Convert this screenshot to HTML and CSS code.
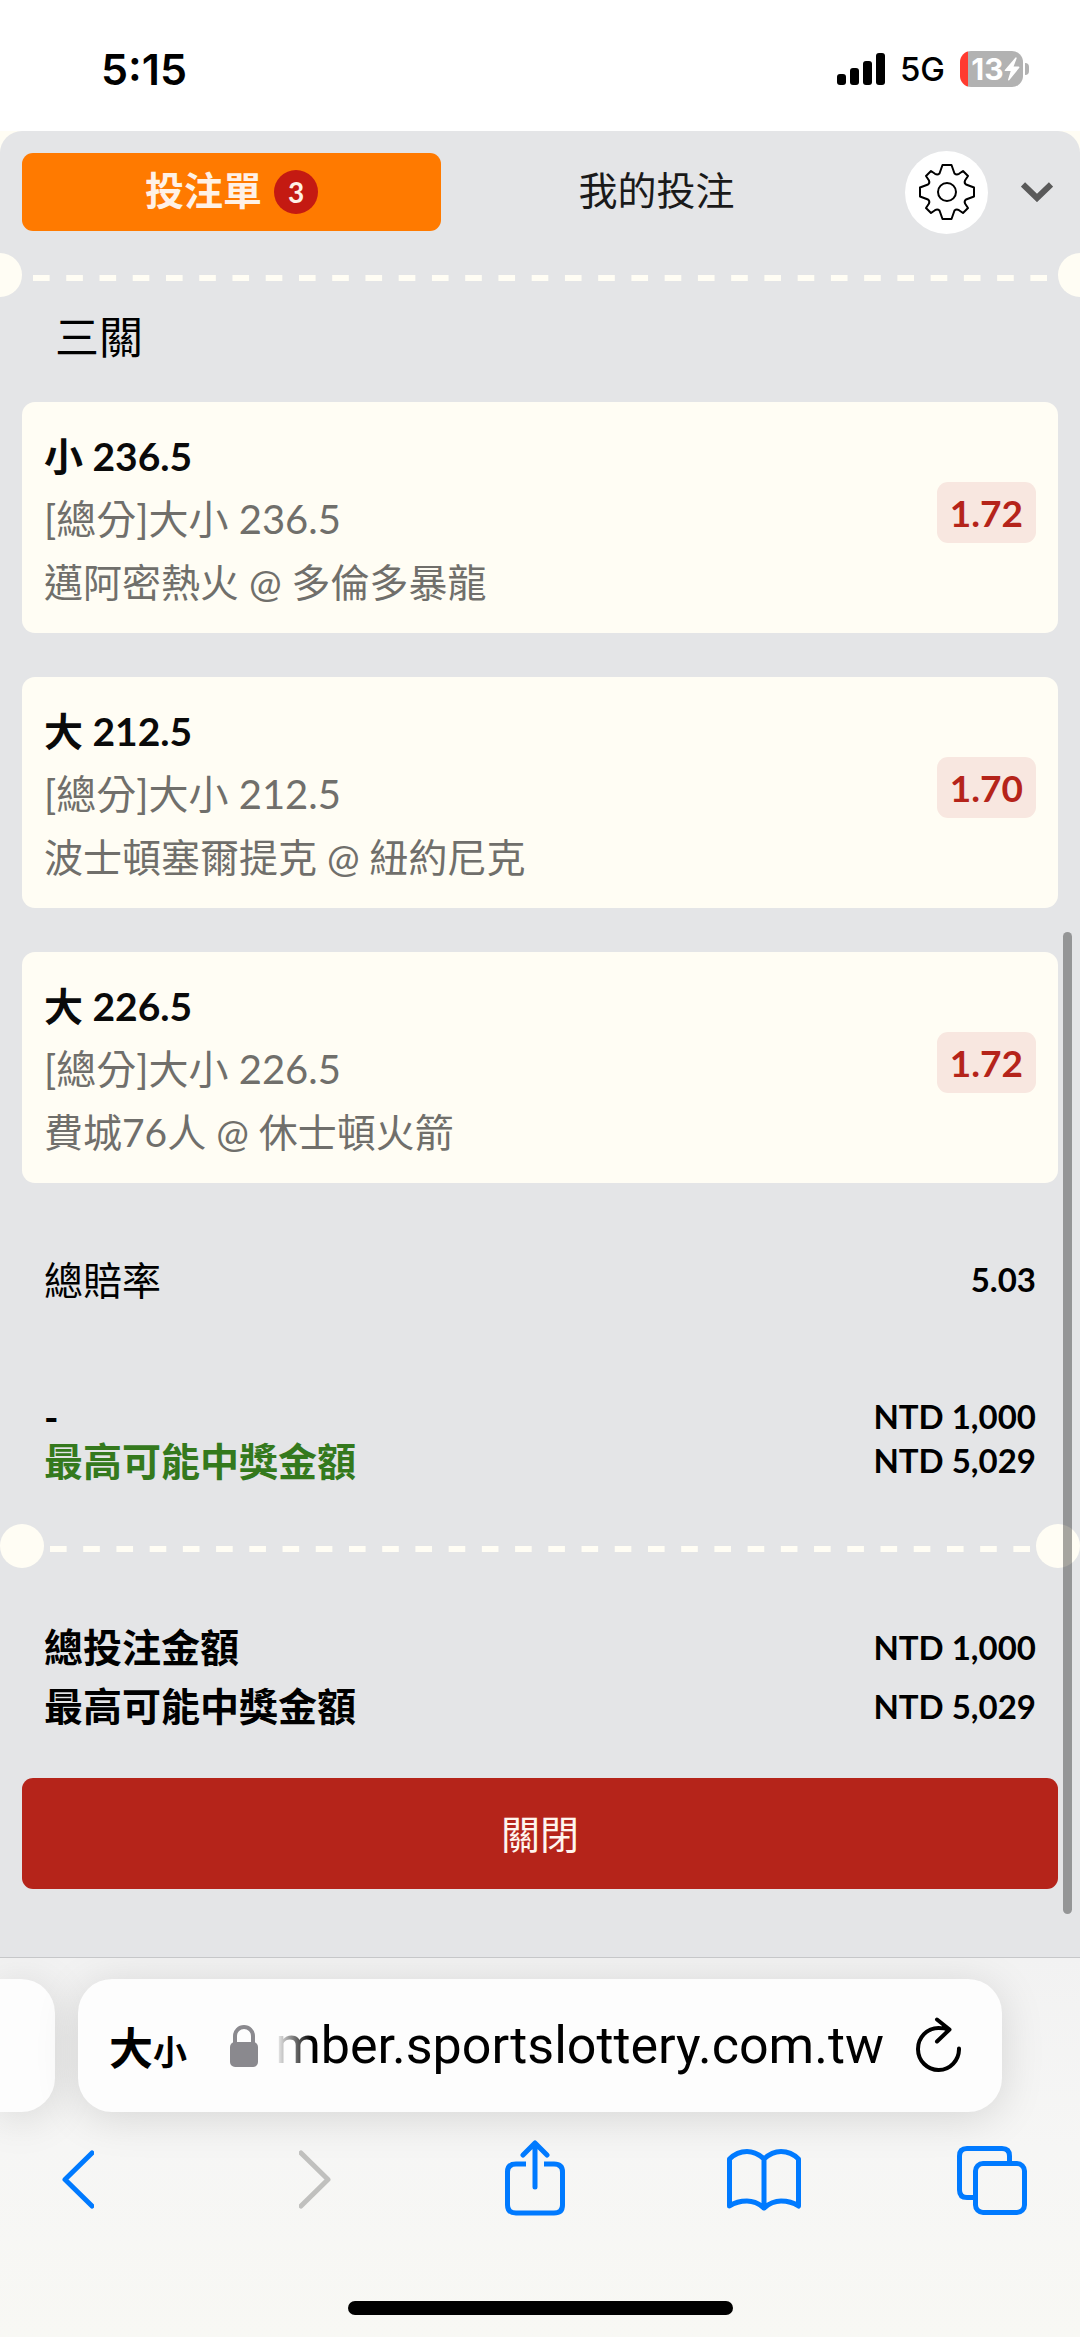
FILE: index.html
```html
<!DOCTYPE html>
<html lang="zh-Hant">
<head>
<meta charset="utf-8">
<meta name="viewport" content="width=device-width, initial-scale=1">
<title>投注單</title>
<link rel="stylesheet" href="styles.css">
</head>
<body>
<header class="status">
  <time class="status-time">5:15</time>
  <div class="status-right">
    <svg class="signal" viewBox="0 0 48 32" aria-hidden="true">
      <rect x="0" y="21" width="9" height="11" rx="3"/>
      <rect x="13" y="15" width="9" height="17" rx="3"/>
      <rect x="26" y="8" width="9" height="24" rx="3"/>
      <rect x="39" y="0" width="9" height="32" rx="3"/>
    </svg>
    <span class="network">5G</span>
    <div class="battery">
      <span class="battery-level">13</span>
      <svg class="bolt" viewBox="0 0 16 24" aria-hidden="true"><path d="M11.500 0.500 L0.800 13 Q0.300 14 1.500 14 H6.700 L4 22.800 Q4.200 24 5.200 23.200 L15.300 10.800 Q15.800 9.600 14.500 9.600 H9.600 L12.700 1.200 Q12.500 0 11.500 0.500Z"/></svg>
    </div>
  </div>
</header>

<main class="sheet-area">
  <div class="sheet">
    <nav class="tabs">
      <button class="tab tab-active" type="button">投注單<span class="count">3</span></button>
      <button class="tab" type="button">我的投注</button>
      <div class="tab-tools">
        <button class="gear" type="button" aria-label="設定">
          <svg viewBox="-28 -28 56 56" aria-hidden="true">
            <path d="M-4.500 -27 H4.500 L7.500 -18.500 Q9.500 -16.800 12 -18.200 L16 -21 L21 -16 L18 -11.500 Q17 -9 19 -7.500 L27 -4.500 V4.500 L19 7.500 Q17 9 18 11.500 L21 16 L16 21 L12 18.200 Q9.500 16.800 7.500 18.500 L4.500 27 H-4.500 L-7.500 18.500 Q-9.500 16.800 -12 18.200 L-16 21 L-21 16 L-18 11.500 Q-17 9 -19 7.500 L-27 4.500 V-4.500 L-19 -7.500 Q-17 -9 -18 -11.500 L-21 -16 L-16 -21 L-12 -18.200 Q-9.500 -16.800 -7.500 -18.500 Z"/>
            <circle r="9"/>
          </svg>
        </button>
        <button class="collapse" type="button" aria-label="收合">
          <svg viewBox="0 0 32 20" aria-hidden="true"><path d="M2 2.500 L16 16 L30 2.500"/></svg>
        </button>
      </div>
    </nav>

    <div class="divider divider-bleed">
      <span class="notch"></span>
      <svg class="dashes" aria-hidden="true"><line x1="0" y1="25" x2="100%" y2="25" pathLength="61"/></svg>
      <span class="notch"></span>
    </div>

    <h1 class="group-title">三關</h1>

    <ul class="bets">
      <li class="bet">
        <div class="bet-text">
          <strong class="bet-pick">小 236.5</strong>
          <span class="bet-market">[總分]大小 236.5</span>
          <span class="bet-game">邁阿密熱火 @ 多倫多暴龍</span>
        </div>
        <span class="odds">1.72</span>
      </li>
      <li class="bet">
        <div class="bet-text">
          <strong class="bet-pick">大 212.5</strong>
          <span class="bet-market">[總分]大小 212.5</span>
          <span class="bet-game">波士頓塞爾提克 @ 紐約尼克</span>
        </div>
        <span class="odds">1.70</span>
      </li>
      <li class="bet">
        <div class="bet-text">
          <strong class="bet-pick">大 226.5</strong>
          <span class="bet-market">[總分]大小 226.5</span>
          <span class="bet-game">費城76人 @ 休士頓火箭</span>
        </div>
        <span class="odds">1.72</span>
      </li>
    </ul>

    <dl class="rows total-odds">
      <div class="row"><dt>總賠率</dt><dd>5.03</dd></div>
    </dl>
    <dl class="rows stake">
      <div class="row"><dt class="strong">-</dt><dd>NTD 1,000</dd></div>
      <div class="row"><dt class="strong win">最高可能中獎金額</dt><dd>NTD 5,029</dd></div>
    </dl>

    <div class="divider divider-inset">
      <span class="notch"></span>
      <svg class="dashes" aria-hidden="true"><line x1="0" y1="25" x2="100%" y2="25" pathLength="59"/></svg>
      <span class="notch"></span>
    </div>

    <dl class="rows totals">
      <div class="row"><dt class="strong">總投注金額</dt><dd>NTD 1,000</dd></div>
      <div class="row"><dt class="strong">最高可能中獎金額</dt><dd>NTD 5,029</dd></div>
    </dl>

    <button class="close" type="button">關閉</button>
    <span class="scrollbar"></span>
  </div>
</main>

<footer class="browser">
  <div class="address-row">
    <span class="previous-tab"></span>
    <div class="address">
      <button class="page-menu" type="button"><span class="page-menu-big">大</span><span class="page-menu-small">小</span></button>
      <svg class="lock" viewBox="0 0 28 42" aria-hidden="true"><rect x="0" y="17" width="28" height="25" rx="5"/><path d="M5 19 V11 A9 9 0 0 1 23 11 V19"/></svg>
      <a class="url" href="#">mber.sportslottery.com.tw</a>
      <button class="reload" type="button" aria-label="重新載入">
        <svg viewBox="0 0 46 58" width="46" height="58" aria-hidden="true"><path d="M44 31.500 A20.500 21 0 1 1 23.500 11 Q29 11 34 12.500 M22 2.500 L34.500 12.500 L22 24.500"/></svg>
      </button>
    </div>
  </div>
  <div class="toolbar">
    <button class="tool" type="button" aria-label="上一頁"><svg viewBox="0 0 32 80" width="32" height="80" aria-hidden="true"><path d="M30 13 L3 39.500 L30 66"/></svg></button>
    <button class="tool tool-forward" type="button" aria-label="下一頁" disabled><svg viewBox="0 0 32 80" width="32" height="80" aria-hidden="true"><path d="M2 13 L29 39.500 L2 66"/></svg></button>
    <button class="tool" type="button" aria-label="分享"><svg viewBox="0 0 60 80" width="60" height="80" aria-hidden="true"><path class="butt" d="M21 24 H11 Q2.500 24 2.500 32 V65 Q2.500 73 11 73 H49 Q57.500 73 57.500 65 V32 Q57.500 24 49 24 H39"/><path d="M30 47 V3.500 M18 15 L30 3 L42 15"/></svg></button>
    <button class="tool" type="button" aria-label="書籤"><svg viewBox="0 0 74 80" width="74" height="80" aria-hidden="true"><path d="M37 19 Q29 11.500 20 11.500 Q10 11.500 2.500 19 V66 Q10 61 20 61 Q29 61 37 68 Q45 61 54 61 Q64 61 71.500 66 V19 Q64 11.500 54 11.500 Q45 11.500 37 19 V68"/></svg></button>
    <button class="tool" type="button" aria-label="分頁"><svg viewBox="0 0 70 80" width="70" height="80" aria-hidden="true"><path class="butt" d="M52.500 21 V16 Q52.500 8.500 45 8.500 H10 Q2.500 8.500 2.500 16 V50 Q2.500 57.500 10 57.500 H16"/><rect x="18.500" y="23.500" width="49" height="49" rx="7.500"/></svg></button>
  </div>
  <div class="home-indicator"></div>
</footer>
</body>
</html>
```

FILE: styles.css
```css
:root {
  --cream: #fffdf4;
  --panel: #e4e5e7;
  --red: #b5241a;
  --blue: #007aff;
  --site: Lato, "Noto Sans CJK TC", sans-serif;
  --system: Inter, "Noto Sans CJK TC", sans-serif;
}

* { box-sizing: border-box; }

body {
  margin: 0;
  background: #fff;
  color: #000;
  font-family: var(--site);
  font-size: 39px;
}

button {
  margin: 0;
  padding: 0;
  border: 0;
  background: none;
  color: inherit;
  font: inherit;
}

ul, dl, dd { margin: 0; padding: 0; list-style: none; }

/* Status bar */
.status {
  display: flex;
  justify-content: space-between;
  align-items: center;
  height: 131px;
  padding: 6px 57px 0 101px;
  font-family: var(--system);
}
.status-time { font-size: 43px; font-weight: 600; }
.status-right { display: flex; align-items: center; gap: 15px; }
.signal { width: 48px; height: 32px; }
.network { font-size: 33px; font-weight: 500; }
.battery {
  position: relative;
  display: flex;
  align-items: center;
  justify-content: center;
  width: 63px;
  height: 36px;
  padding-left: 8px;
  border-radius: 11px;
  background: linear-gradient(90deg, #ff3b30 8px, #b2b2b2 8px);
  color: #fff;
  font-size: 30px;
  font-weight: 700;
}
.battery::after {
  content: "";
  position: absolute;
  right: -6px;
  top: 12px;
  width: 4px;
  height: 12px;
  border-radius: 0 4px 4px 0;
  background: #b2b2b2;
}
.bolt { width: 16px; height: 24px; fill: #fff; flex: none; }

/* Bet slip sheet */
.sheet-area { background: var(--cream); }
.sheet {
  position: relative;
  overflow: hidden;
  padding: 19px 0 68px;
  border-radius: 22px 22px 0 0;
  background: var(--panel);
}
.tabs {
  display: flex;
  align-items: center;
  gap: 6px;
  height: 84px;
  padding: 0 22px;
}
.tab {
  display: flex;
  flex: 1;
  align-items: center;
  justify-content: center;
  gap: 12px;
  height: 78px;
  border-radius: 11px;
  color: #1a1a1a;
  line-height: 48px;
  padding-bottom: 4px;
}
.tab-active { background: #ff7a00; color: #fff1e6; font-weight: 700; }
.count {
  width: 44px;
  height: 44px;
  margin-top: 4px;
  border-radius: 50%;
  background: #c41a12;
  font-size: 28px;
  font-weight: 700;
  line-height: 44px;
}
.tab-tools { display: flex; align-items: center; gap: 28px; padding-left: 33px; }
.gear {
  display: flex;
  align-items: center;
  justify-content: center;
  width: 83px;
  height: 83px;
  border-radius: 50%;
  background: #fff;
}
.gear svg { width: 56px; height: 56px; fill: none; stroke: #000; stroke-width: 2; stroke-linejoin: round; }
.collapse { display: flex; align-items: center; justify-content: center; width: 42px; height: 83px; }
.collapse svg { width: 32px; height: 20px; fill: none; stroke: #5a5a5a; stroke-width: 6; }

.divider { display: flex; height: 44px; }
.divider-bleed { gap: 11px; margin: 19px -22px 0; }
.divider-inset { gap: 6px; margin-top: 41px; }
.notch { flex: none; width: 44px; height: 44px; border-radius: 50%; background: var(--cream); }
.dashes { flex: 1; width: 0; height: 44px; }
.dashes line { stroke: var(--cream); stroke-width: 6; stroke-dasharray: 1 1; }

.group-title {
  margin: 10px 55px 35px;
  font-size: 44px;
  font-weight: 400;
  line-height: 60px;
}

.bets { display: grid; gap: 44px; padding: 0 22px; }
.bet {
  display: flex;
  align-items: center;
  justify-content: space-between;
  padding: 23px 22px 19px;
  border-radius: 13px;
  background: var(--cream);
  line-height: 63px;
}
.bet-text { display: grid; color: #706f6b; }
.bet-pick { color: #0a0a0a; font-weight: 700; }
.bet-market { font-size: 40px; }
.odds {
  margin-bottom: 14px;
  padding: 0 13px;
  border-radius: 11px;
  background: #f8e7e0;
  color: var(--red);
  font-size: 37px;
  font-weight: 700;
  line-height: 61px;
}

.rows { padding: 0 44px; }
.row { display: flex; align-items: center; justify-content: space-between; }
.row dd { padding-bottom: 2px; font-size: 33px; font-weight: 700; line-height: 40px; }
.strong { font-weight: 700; }
.win { color: #34791d; }
.total-odds { padding-top: 67px; line-height: 60px; }
.stake { padding-top: 85px; line-height: 44px; }
.totals { padding-top: 50px; line-height: 59px; }

.close {
  display: block;
  width: calc(100% - 44px);
  height: 111px;
  margin: 42px 22px 0;
  padding-bottom: 4px;
  border-radius: 11px;
  background: var(--red);
  color: #fff5ee;
}
.scrollbar {
  position: absolute;
  top: 801px;
  right: 8px;
  bottom: 43px;
  width: 9px;
  border-radius: 5px;
  background: rgba(0, 0, 0, 0.35);
}

/* Browser chrome */
.browser {
  overflow: hidden;
  padding: 21px 0 22px;
  border-top: 1px solid #c6c7c9;
  background: linear-gradient(#f2f2f2, #f6f6f5 50%, #f8f8f4);
  font-family: var(--system);
}
.address-row { display: flex; gap: 23px; padding-right: 78px; }
.previous-tab,
.address { height: 133px; background: #fdfdfd; box-shadow: 0 6px 44px rgba(0, 0, 0, 0.13); }
.previous-tab { flex: none; width: 55px; border-radius: 0 34px 34px 0; }
.address {
  display: flex;
  flex: 1;
  align-items: center;
  min-width: 0;
  padding: 0 41px 0 31px;
  border-radius: 34px;
}
.page-menu { display: flex; align-items: baseline; font-weight: 700; }
.page-menu-big { font-size: 44px; }
.page-menu-small { font-size: 34px; }
.lock { flex: none; width: 28px; height: 42px; margin-left: 43px; fill: #8a898e; }
.lock path { fill: none; stroke: #8a898e; stroke-width: 4; }
.url {
  flex: 1;
  min-width: 0;
  margin: 0 31px 0 17px;
  color: #000;
  font-family: Roboto, sans-serif;
  font-size: 52px;
  text-align: right;
  text-decoration: none;
  white-space: nowrap;
  mask-image: linear-gradient(90deg, transparent, #000 36px);
}
.tool, .reload { display: flex; flex: none; justify-content: center; }
.tool { width: 74px; color: var(--blue); }
.tool svg, .reload svg {
  display: block;
  fill: none;
  stroke: currentColor;
  stroke-width: 5;
  stroke-linecap: round;
  stroke-linejoin: round;
}
.reload svg { stroke-width: 4; }
.tool .butt { stroke-linecap: butt; }
.tool-forward { padding-left: 16px; color: #c0c0be; }
.toolbar { display: flex; justify-content: space-between; padding: 28px 51px 0 41px; }
.home-indicator {
  width: 385px;
  height: 14px;
  margin: 81px auto 0;
  border-radius: 7px;
  background: #000;
}
```
